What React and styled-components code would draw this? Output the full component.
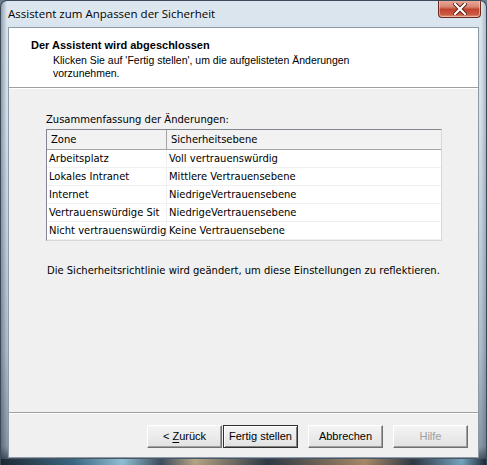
import React from "react";
import styled, { createGlobalStyle } from "styled-components";

const GlobalStyle = createGlobalStyle`
  html, body {
    margin: 0;
    padding: 0;
    background: #6d7c8a;
  }
`;

const Window = styled.div`
  width: 487px;
  height: 465px;
  box-sizing: border-box;
  padding: 0 7px 7px 7px;
  display: flex;
  flex-direction: column;
  border-radius: 7px 7px 0 0;
  border: 1px solid #3a4a5a;
  border-bottom: none;
  background:
    linear-gradient(to right, rgba(20, 30, 45, 0.35) 0, rgba(255, 255, 255, 0) 6px, rgba(255, 255, 255, 0) 480px, rgba(20, 30, 45, 0.3) 487px),
    linear-gradient(to bottom, #dbe6ef 0, #d3dfea 25%, #c2d0dd 50%, #aebdcb 75%, #8796a5 96%, #2a3440 100%);
  position: relative;
  overflow: hidden;
`;

const BottomGlow = styled.div`
  position: absolute;
  left: 0;
  right: 0;
  bottom: 0;
  height: 6px;
  background: linear-gradient(
    to right,
    #1b2530 0,
    #3a6d8a 15%,
    #9fd3ea 25%,
    #3d4f60 33%,
    #c9b38c 40%,
    #2b3642 55%,
    #b8946a 75%,
    #2b3642 85%,
    #7fb2cf 95%,
    #1b2530 100%
  );
  opacity: 0.85;
`;

const TitleBar = styled.div`
  height: 26px;
  display: flex;
  align-items: flex-start;
`;

const TitleText = styled.div`
  font-family: "Open Sans", "Noto Sans", sans-serif;
  font-size: 11.5px;
  color: #000;
  line-height: 26px;
  text-shadow: 0 0 6px rgba(255, 255, 255, 0.9);
`;

const CloseButton = styled.div`
  margin-left: auto;
  margin-right: -2px;
  margin-top: -1px;
  width: 43px;
  height: 18px;
  box-sizing: border-box;
  border: 1px solid #6a2a20;
  border-top: none;
  border-radius: 0 0 4px 4px;
  background: linear-gradient(to bottom, #e9ad9f 0, #d98673 40%, #c0432e 55%, #cc5a42 85%, #e09a82 100%);
  display: flex;
  align-items: center;
  justify-content: center;
  box-shadow: inset 0 0 0 1px rgba(255, 220, 210, 0.5);
`;

const Client = styled.div`
  flex: 1;
  display: flex;
  flex-direction: column;
  border: 1px solid #8c9aa8;
  background: #f0f0f0;
  min-height: 0;
`;

const Header = styled.div`
  height: 60px;
  background: #fff;
  border-bottom: 1px solid #a0a0a0;
  box-shadow: 0 1px 0 #fff;
  padding: 10px 0 0 22px;
  box-sizing: border-box;
`;

const HeaderTitle = styled.div`
  font-family: "Liberation Sans", Arial, sans-serif;
  font-weight: bold;
  font-size: 11px;
  line-height: 14px;
  color: #000;
  margin-bottom: 2px;
`;

const HeaderSub = styled.div`
  font-family: "Liberation Sans", Arial, sans-serif;
  font-size: 10.5px;
  line-height: 13px;
  color: #000;
  padding-left: 22px;
`;

const Body = styled.div`
  flex: 1;
  padding: 25px 0 0 37px;
  display: flex;
  flex-direction: column;
  font-family: "DejaVu Sans Condensed", "DejaVu Sans", sans-serif;
  font-stretch: condensed;
  font-size: 11.1px;
  color: #000;
`;

const Label = styled.div`
  line-height: 13px;
  margin-bottom: 3px;
`;

const List = styled.div`
  width: 396px;
  box-sizing: border-box;
  border: 1px solid;
  border-color: #828790 #d8d8d8 #d8d8d8 #828790;
  background: #fff;
  display: grid;
  grid-template-columns: 120px 1fr;
`;

const HeadCell = styled.div`
  height: 20px;
  line-height: 19px;
  box-sizing: border-box;
  background: #f2f2f2;
  border-bottom: 1px solid #a5a5a5;
  border-right: ${(p) => (p.$last ? "none" : "1px solid #a5a5a5")};
  padding-left: 4px;
`;

const Cell = styled.div`
  height: 18px;
  line-height: 17px;
  box-sizing: border-box;
  border-bottom: 1px solid #f0f0f0;
  border-right: ${(p) => (p.$last ? "none" : "1px solid #f0f0f0")};
  padding-left: 2px;
  white-space: nowrap;
`;

const Note = styled.div`
  line-height: 13px;
  margin-top: 23px;
  margin-left: 1px;
`;

const Footer = styled.div`
  height: 45px;
  box-sizing: border-box;
  border-top: 1px solid #a0a0a0;
  box-shadow: inset 0 1px 0 #fff;
  display: flex;
  justify-content: flex-end;
  align-items: flex-start;
  padding: 12px 10px 0 0;
`;

const Button = styled.div`
  width: 75px;
  height: 23px;
  box-sizing: border-box;
  margin-left: ${(p) => p.$gap}px;
  font-family: "Liberation Sans", Arial, sans-serif;
  font-size: 11px;
  line-height: 21px;
  text-align: center;
  color: ${(p) => (p.$disabled ? "#a0a0a0" : "#000")};
  background: linear-gradient(to bottom, #f4f4f4 0, #ebebeb 50%, #e2e2e2 100%);
  border: 1px solid;
  border-color: ${(p) =>
    p.$default ? "#303030" : "#ffffff #707070 #707070 #ffffff"};
  box-shadow: ${(p) =>
    p.$default
      ? "inset 1px 1px 0 #fff, inset -1px -1px 0 #808080"
      : "inset -1px -1px 0 #a0a0a0"};
  u {
    text-decoration: underline;
    text-underline-offset: 2px;
  }
`;

const rows = [
  ["Arbeitsplatz", "Voll vertrauenswürdig"],
  ["Lokales Intranet", "Mittlere Vertrauensebene"],
  ["Internet", "NiedrigeVertrauensebene"],
  ["Vertrauenswürdige Sit", "NiedrigeVertrauensebene"],
  ["Nicht vertrauenswürdig", "Keine Vertrauensebene"],
];

export default function App() {
  return (
    <>
      <GlobalStyle />
      <Window>
        <TitleBar>
          <TitleText>Assistent zum Anpassen der Sicherheit</TitleText>
          <CloseButton>
            <svg width="14" height="12" viewBox="0 0 14 12">
              <path
                d="M2 1 L12 11 M12 1 L2 11"
                stroke="#5a1a10"
                strokeWidth="4"
                strokeLinecap="square"
              />
              <path
                d="M2 1 L12 11 M12 1 L2 11"
                stroke="#fff"
                strokeWidth="2.2"
                strokeLinecap="square"
              />
            </svg>
          </CloseButton>
        </TitleBar>
        <Client>
          <Header>
            <HeaderTitle>Der Assistent wird abgeschlossen</HeaderTitle>
            <HeaderSub>
              Klicken Sie auf 'Fertig stellen', um die aufgelisteten Änderungen
              <br />
              vorzunehmen.
            </HeaderSub>
          </Header>
          <Body>
            <Label>Zusammenfassung der Änderungen:</Label>
            <List>
              <HeadCell>Zone</HeadCell>
              <HeadCell $last>Sicherheitsebene</HeadCell>
              {rows.map(([zone, level]) => (
                <React.Fragment key={zone}>
                  <Cell>{zone}</Cell>
                  <Cell $last>{level}</Cell>
                </React.Fragment>
              ))}
            </List>
            <Note>
              Die Sicherheitsrichtlinie wird geändert, um diese Einstellungen zu
              reflektieren.
            </Note>
          </Body>
          <Footer>
            <Button $gap={0}>
              &lt; <u>Z</u>urück
            </Button>
            <Button $gap={1} $default>
              Fertig stellen
            </Button>
            <Button $gap={10}>Abbrechen</Button>
            <Button $gap={10} $disabled>
              Hilfe
            </Button>
          </Footer>
        </Client>
        <BottomGlow />
      </Window>
    </>
  );
}
